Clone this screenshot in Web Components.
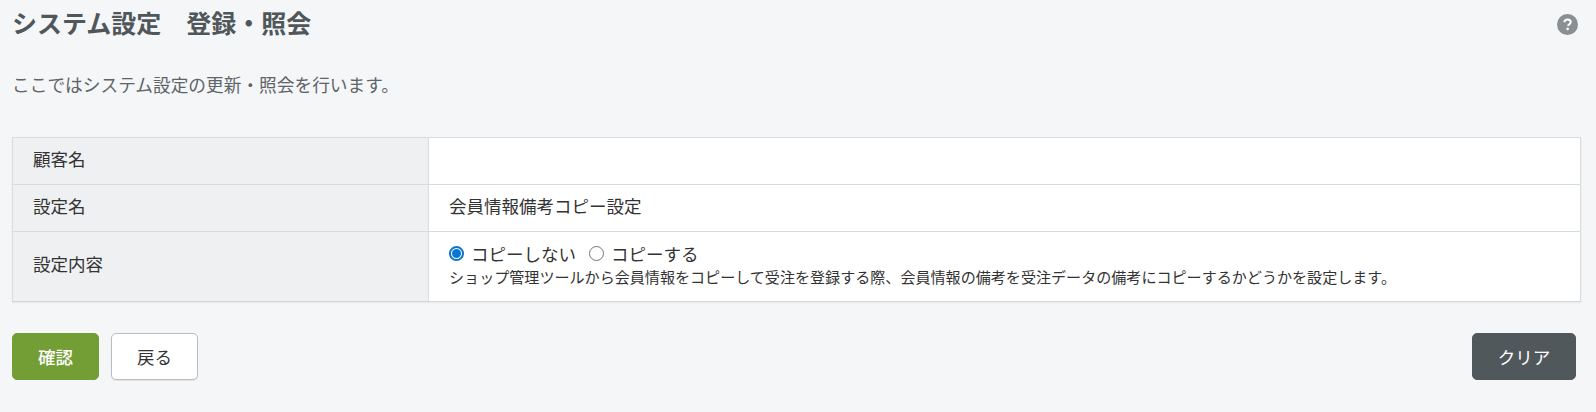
<!DOCTYPE html>
<html lang="ja"><head><meta charset="utf-8">
<style>
html,body{margin:0;padding:0}
body{width:1596px;height:412px;overflow:hidden;background:#f4f6f8;font-family:"Noto Sans CJK JP","Noto Sans",sans-serif;color:#333;}
</style></head><body>
<settings-page></settings-page>
<template id="t-page"><style>
:host{display:flex;flex-direction:column;padding:0 15px 0 12px}
.msg{margin:25px 0 0;font-size:17.7px;line-height:26px;color:#5e6468;height:26px}
settings-table{margin-top:40px}
.actions{display:flex;gap:12px;margin-top:31px;padding-right:5px}
.sp{flex:1}
</style>
<page-title>システム設定　登録・照会</page-title>
<p class="msg">ここではシステム設定の更新・照会を行います。</p>
<settings-table>
<setting-row label="顧客名"></setting-row>
<setting-row label="設定名">会員情報備考コピー設定</setting-row>
<setting-row label="設定内容" tall>
<radio-choice></radio-choice>
<div style="font-size:15.07px;line-height:21px;padding-top:1px;color:#333">ショップ管理ツールから会員情報をコピーして受注を登録する際、会員情報の備考を受注データの備考にコピーするかどうかを設定します。</div>
</setting-row>
</settings-table>
<div class="actions">
<app-button kind="primary">確認</app-button>
<app-button>戻る</app-button>
<span class="sp"></span>
<app-button kind="dark">クリア</app-button>
</div></template>
<template id="t-title"><style>
:host{display:flex;align-items:flex-start;justify-content:space-between;height:46px}
h1{margin:0;font-size:25px;line-height:44px;font-weight:700;color:#50575b}
svg{display:block;margin-right:3px;margin-top:14px}
</style><h1><slot></slot></h1>
<svg width="21" height="21" viewBox="0 0 21 21" aria-hidden="true"><circle cx="10.5" cy="10.5" r="10.5" fill="#8b8f92"/><path d="M7.4 8.2c.1-1.8 1.4-2.8 3.2-2.8 1.9 0 3.1 1 3.1 2.6 0 1.2-.6 1.8-1.5 2.4-.8.5-1 .8-1 1.6" fill="none" stroke="#fff" stroke-width="2"/><circle cx="10.6" cy="14.9" r="1.3" fill="#fff"/></svg></template>
<template id="t-table"><style>
:host{display:block;border:1px solid #d8dcdf;border-bottom-color:#d2d6d9;background:#fff;box-shadow:0 1px 2px rgba(0,0,0,.06)}
</style><slot></slot></template>
<template id="t-row"><style>
:host{display:grid;grid-template-columns:416px 1fr;height:47px;border-top:1px solid #d8dcdf;box-sizing:border-box;font-size:17.5px}
:host(:first-child){border-top:0;height:46px}
:host([tall]){height:70px}
.l,.v{padding-bottom:6px;box-sizing:border-box}
:host([tall]) .v{padding-bottom:5px}
.l{background:#eef0f2;border-right:1px solid #d8dcdf;display:flex;align-items:center;padding-left:20px;color:#333;font-size:17.5px}
.v{display:flex;flex-direction:column;justify-content:center;padding-left:20px;color:#333}
</style><div class="l" id="l"></div><div class="v"><slot></slot></div></template>
<template id="t-radio"><style>
:host{display:flex;align-items:center;height:24px;font-size:17.5px;color:#333}
.r{width:15px;height:15px;border-radius:50%;box-sizing:border-box;flex:none}
.on{border:2px solid #0b76d1;background:#fff;display:flex;align-items:center;justify-content:center}
.on i{display:block;width:9px;height:9px;border-radius:50%;background:#0b76d1}
.off{border:1px solid #767676;background:#fff}
span{margin:0 13px 0 7px}
</style><div class="r on"><i></i></div><span>コピーしない</span><div class="r off"></div><span>コピーする</span></template>
<template id="t-btn"><style>
:host{display:inline-flex;align-items:center;justify-content:center;box-sizing:border-box;width:87px;height:47px;border-radius:5px;background:#fff;border:1px solid #b9bdc0;color:#333;font-size:17.5px;box-shadow:0 1px 1px rgba(0,0,0,.08)}
:host([kind=primary]){background:#739e36;border-color:#739e36;color:#fff;font-weight:500;box-shadow:none}
:host([kind=dark]){width:104px;background:#51585c;border-color:#51585c;color:#fff;box-shadow:none}
</style><slot></slot></template>
<script>
function mk(name,id,init){customElements.define(name,class extends HTMLElement{constructor(){super();this.attachShadow({mode:"open"}).appendChild(document.getElementById(id).content.cloneNode(true));if(init)init(this)}})}
mk("page-title","t-title");
mk("setting-row","t-row",function(e){e.shadowRoot.getElementById("l").textContent=e.getAttribute("label")||""});
mk("settings-table","t-table");
mk("radio-choice","t-radio");
mk("app-button","t-btn");
mk("settings-page","t-page");
</script>
</body></html>
